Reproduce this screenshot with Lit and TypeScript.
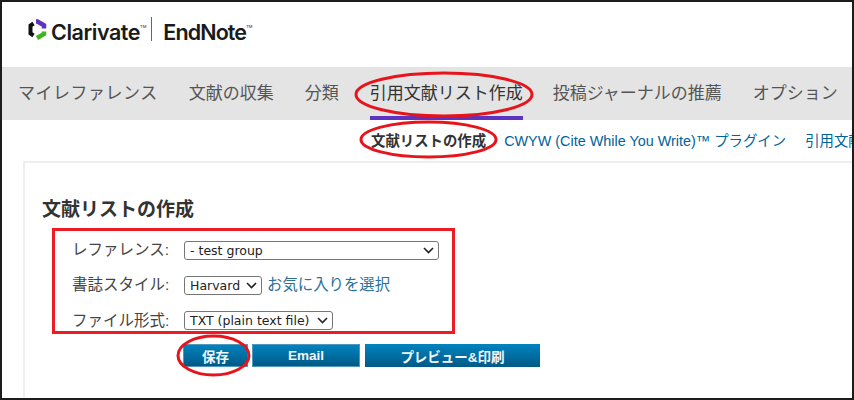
import { LitElement, html, css } from "lit";
import { customElement } from "lit/decorators.js";

@customElement("app-root")
export class AppRoot extends LitElement {
  static styles = css`
    :host {
      display: block;
      position: relative;
      width: 854px;
      height: 400px;
      box-sizing: border-box;
      border: 2px solid #1c1c1c;
      background: #fff;
      overflow: hidden;
      font-family: "Liberation Sans", "Noto Sans CJK JP", sans-serif;
      color: #333;
    }
    .header {
      height: 65px;
      display: flex;
      align-items: center;
      padding: 0 0 11px 25px;
      box-sizing: border-box;
    }
    .logo-icon { width: 20px; height: 21px; margin-right: 4px; flex: none; }
    .brand {
      font-family: Inter, "Liberation Sans", sans-serif;
      font-weight: 600;
      font-size: 21.5px;
      letter-spacing: -0.45px;
      color: #1a1a1a;
      line-height: 24px;
    }
    .brand.second { letter-spacing: -0.9px; }
    .tm { font-size: 4px; vertical-align: 12px; letter-spacing: 0; color: #666; }
    .divider { width: 1px; height: 24px; background: #666; margin: 0 11px 0 5px; }
    .nav {
      height: 53px;
      background: #e4e4e4;
      display: flex;
      padding-left: 16px;
      font-size: 17px;
      white-space: nowrap;
      color: #555;
    }
    .nav span { line-height: 53px; height: 49px; }
    .nav span:nth-child(1) { letter-spacing: 0.5px; }
    .nav span:nth-child(2) { margin-left: 31px; }
    .nav span:nth-child(3) { margin-left: 31px; }
    .nav span:nth-child(4) { margin-left: 31px; }
    .nav span:nth-child(5) { margin-left: 30px; }
    .nav span:nth-child(6) { margin-left: 31px; }
    .nav .active { color: #333; border-bottom: 4px solid #5e33bf; }
    .sub {
      height: 39px;
      padding-bottom: 2px;
      display: flex;
      align-items: center;
      gap: 19px;
      padding-left: 369px;
      font-size: 14.4px;
      white-space: nowrap;
      color: #00639a;
    }
    .sub b { color: #333; margin-right: -1px; }
    .panel {
      margin-left: 21px;
      border-top: 2px solid #eee;
      border-left: 2px solid #eee;
      padding: 35px 0 0 17px;
      height: 236px;
      box-sizing: border-box;
    }
    h2 {
      margin: 0;
      font-size: 19px;
      line-height: 24px;
      font-weight: 700;
      color: #333;
    }
    .box {
      margin: 6px 0 0 10px;
      width: 403px;
      height: 106px;
      box-sizing: border-box;
      border: 3px solid #ed1c24;
      display: grid;
      grid-template-columns: 97px auto;
      grid-template-rows: 19px 19px 19px;
      row-gap: 16px;
      column-gap: 14px;
      padding: 10px 0 0 18px;
      font-size: 15.5px;
      color: #444;
    }
    .box label { line-height: 19px; white-space: nowrap; margin: -1px 0 0 -1px; }
    .box label.third { margin-top: 0; }
    .row { display: flex; align-items: center; gap: 5px; }
    .sel {
      box-sizing: border-box;
      height: 19px;
      display: flex;
      align-items: center;
      justify-content: space-between;
      border: 1px solid #767676;
      border-radius: 3px;
      background: #fff;
      font-family: "DejaVu Sans", sans-serif;
      font-size: 12.500px;
      color: #222;
      padding: 0 4px 0 5px;
      white-space: nowrap;
    }
    .sel svg { width: 11px; height: 7px; flex: none; }
    .sel.w1 { width: 255px; }
    .sel.w2 { width: 78px; }
    .sel.w3 { width: 149px; }
    .fav { font-size: 15.4px; color: #2e7196; white-space: nowrap; margin-top: -5px; }
    .btns {
      display: flex;
      margin: 10px 0 0 141px;
    }
    .btn {
      box-sizing: border-box;
      height: 23px;
      display: flex;
      align-items: center;
      justify-content: center;
      background: linear-gradient(#0083c1, #005a85);
      color: #f2f6f8;
      font-weight: 700;
      font-size: 13.500px;
    }
    .b1 { width: 65px; margin-right: 4px; border: 1px solid #4f97bd; }
    .b2 { width: 108px; margin-right: 5px; border: 1px solid #4f97bd; }
    .b3 { width: 175px; }
    .marks {
      position: absolute;
      left: -2px;
      top: -2px;
      width: 854px;
      height: 400px;
      pointer-events: none;
    }
    .marks ellipse { fill: none; stroke: #e8141c; stroke-width: 3; }
  `;

  private chev() {
    return html`<svg viewBox="0 0 11 7"><path d="M1 1l4.500 4.500L10 1" fill="none" stroke="#222" stroke-width="1.600"/></svg>`;
  }

  render() {
    return html`
      <div class="header">
        <svg class="logo-icon" viewBox="0 0 20 21">
          <path d="M9 2.500L10.500 2.500L17 6.200V9.500" fill="none" stroke="#5e33bf" stroke-width="4.500"/>
          <path d="M17 12.500V15L10 19" fill="none" stroke="#3cb521" stroke-width="4.500"/>
          <path d="M6.500 4.500L3.500 6.500V14.500L6.500 16.500" fill="none" stroke="#111" stroke-width="4"/>
        </svg>
        <span class="brand">Clarivate<span class="tm">TM</span></span>
        <span class="divider"></span>
        <span class="brand second">EndNote<span class="tm">TM</span></span>
      </div>
      <div class="nav">
        <span>マイレファレンス</span>
        <span>文献の収集</span>
        <span>分類</span>
        <span class="active">引用文献リスト作成</span>
        <span>投稿ジャーナルの推薦</span>
        <span>オプション</span>
      </div>
      <div class="sub">
        <b>文献リストの作成</b>
        <span>CWYW (Cite While You Write)™ プラグイン</span>
        <span>引用文献の書式</span>
      </div>
      <div class="panel">
        <h2>文献リストの作成</h2>
        <div class="box">
          <label>レファレンス:</label>
          <div class="row"><div class="sel w1">- test group ${this.chev()}</div></div>
          <label>書誌スタイル:</label>
          <div class="row"><div class="sel w2">Harvard ${this.chev()}</div><span class="fav">お気に入りを選択</span></div>
          <label class="third">ファイル形式:</label>
          <div class="row"><div class="sel w3">TXT (plain text file) ${this.chev()}</div></div>
        </div>
        <div class="btns">
          <div class="btn b1">保存</div>
          <div class="btn b2">Email</div>
          <div class="btn b3">プレビュー&印刷</div>
        </div>
      </div>
      <svg class="marks" viewBox="0 0 854 400">
        <ellipse cx="444" cy="94.500" rx="88" ry="21.500"/>
        <ellipse cx="428.500" cy="139.500" rx="67.500" ry="17.500"/>
        <ellipse cx="213.500" cy="355.500" rx="35.500" ry="19.500"/>
      </svg>
    `;
  }
}
